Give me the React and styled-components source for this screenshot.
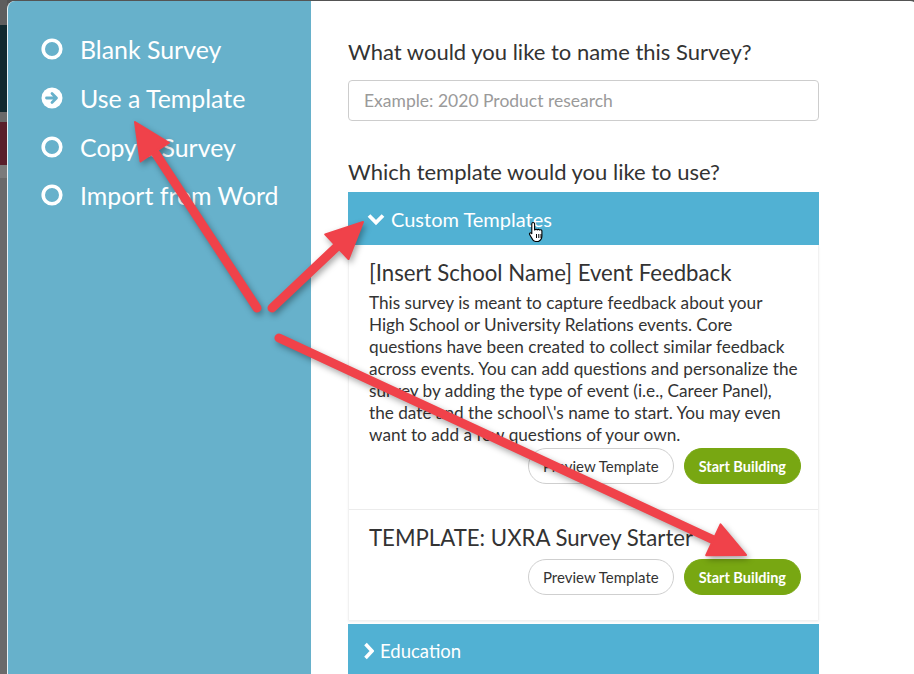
import React from 'react';
import styled, { createGlobalStyle } from 'styled-components';

const Global = createGlobalStyle`
  html, body { margin: 0; padding: 0; width: 914px; height: 674px; overflow: hidden; background: #545454; }
  body { font-family: Lato, "Open Sans", sans-serif; }
  * { box-sizing: border-box; }
`;

const Screen = styled.div`
  position: relative;
  width: 914px;
  height: 674px;
  display: flex;
  padding-top: 1px;
  overflow: hidden;
  background: #545454;
`;

const BackStrip = styled.div`
  width: 7px;
  flex: none;
  display: flex;
  flex-direction: column;
  margin-top: -1px;
`;

const Segment = styled.div`
  height: ${p => p.$h}px;
  flex: ${p => (p.$grow ? 1 : 'none')};
  background: ${p => p.$c};
`;

const Modal = styled.div`
  flex: 1;
  display: flex;
  margin-right: -4px;
  border-radius: 8px 8px 0 0;
  overflow: hidden;
  background: #fff;
  border-left: 1px solid #e8f2f5;
`;

const Sidebar = styled.nav`
  width: 303px;
  flex: none;
  background: #67b1cb;
  padding-top: 24px;
  display: flex;
  flex-direction: column;
`;

const MenuItem = styled.div`
  height: 48.7px;
  display: flex;
  align-items: center;
  gap: 17px;
  padding-left: 33px;
  color: #fff;
  font-size: 24.9px;
`;

const Main = styled.main`
  flex: 1;
  padding: 37px 0 0 37px;
  display: flex;
  flex-direction: column;
`;

const Column = styled.div`
  width: 471px;
  display: flex;
  flex-direction: column;
`;

const Heading = styled.h2`
  margin: ${p => p.$mt || 0}px 0 0;
  font-size: 22px;
  line-height: 28px;
  font-weight: 400;
  color: #333;
`;

const NameInput = styled.input`
  margin-top: 14px;
  height: 41px;
  width: 100%;
  border: 1px solid #cdcdcd;
  border-radius: 4px;
  padding: 0 15px;
  font-family: Lato, sans-serif;
  font-size: 17.5px;
  color: #333;
  outline: none;
  &::placeholder { color: #9a9a9a; }
`;

const AccHeader = styled.div`
  position: relative;
  margin-top: ${p => p.$mt}px;
  height: 53px;
  flex: none;
  background: #51b1d3;
  display: flex;
  align-items: center;
  gap: ${p => p.$gap}px;
  padding-left: ${p => p.$pl}px;
  color: #fff;
  font-size: ${p => p.$fs}px;
`;

const CardList = styled.div`
  border-left: 1px solid #f1f1f1;
  border-right: 1px solid #f1f1f1;
  box-shadow: 0 2px 2px rgba(0,0,0,0.06);
`;

const Card = styled.section`
  padding: 14px 17px 25px 20px;
  border-top: ${p => (p.$sep ? '1px solid #ececec' : 'none')};
  display: flex;
  flex-direction: column;
`;

const CardTitle = styled.h3`
  margin: 0;
  font-size: 22.2px;
  line-height: 28px;
  font-weight: 400;
  color: #333;
`;

const CardText = styled.p`
  margin: 5px 0 0;
  font-size: 17.2px;
  line-height: 22px;
  color: #333;
  white-space: nowrap;
`;

const Actions = styled.div`
  margin-top: ${p => p.$mt}px;
  display: flex;
  justify-content: flex-end;
  gap: 10px;
`;

const Button = styled.button`
  height: 36px;
  border-radius: 18px;
  padding: 0 14px;
  font-family: Lato, sans-serif;
  font-size: ${p => (p.$primary ? 14.5 : 15)}px;
  border: 1px solid ${p => (p.$primary ? '#78a712' : '#cfcfcf')};
  background: ${p => (p.$primary ? '#78a712' : '#fff')};
  color: ${p => (p.$primary ? '#fff' : '#333')};
  font-weight: ${p => (p.$primary ? 700 : 400)};
  cursor: pointer;
`;

const Overlay = styled.svg`
  position: absolute;
  left: 0;
  top: 0;
  pointer-events: none;
  filter: drop-shadow(2px 3px 3px rgba(0,0,0,0.35));
`;

const Cursor = styled.svg`
  position: absolute;
  left: 528px;
  top: 221px;
`;

const Circle = ({ active }) => (
  <svg width="22" height="22" viewBox="0 0 22 22">
    {active ? (
      <>
        <circle cx="11" cy="11" r="10.5" fill="#fff" />
        <path d="M5.5 11h9M11 6.5l4.5 4.5-4.5 4.5" stroke="#67b1cb" strokeWidth="2.8" fill="none" strokeLinecap="round" strokeLinejoin="round" />
      </>
    ) : (
      <circle cx="11" cy="11" r="8.8" fill="none" stroke="#fff" strokeWidth="3.6" />
    )}
  </svg>
);

const ChevronDown = () => (
  <svg width="18" height="14" viewBox="0 0 18 14">
    <polyline points="2,3.5 9,10.5 16,3.5" fill="none" stroke="#fff" strokeWidth="3.8" strokeLinejoin="miter" />
  </svg>
);

const ChevronRight = () => (
  <svg width="11" height="18" viewBox="0 0 11 18">
    <polyline points="2.5,2 9,9 2.5,16" fill="none" stroke="#fff" strokeWidth="3.6" strokeLinejoin="miter" />
  </svg>
);

const arrows = [
  { t: [257, 308], h: [135, 122] },
  { t: [272, 308], h: [363, 222] },
  { t: [279, 338], h: [746, 555] },
];

const Arrow = ({ t, h }) => {
  const dx = h[0] - t[0];
  const dy = h[1] - t[1];
  const len = Math.hypot(dx, dy);
  const ux = dx / len;
  const uy = dy / len;
  const hl = 36;
  const hw = 17;
  const bx = h[0] - ux * hl;
  const by = h[1] - uy * hl;
  const nx = -uy;
  const ny = ux;
  const pts = `${h[0]},${h[1]} ${bx + nx * hw},${by + ny * hw} ${bx - nx * hw},${by - ny * hw}`;
  return (
    <g>
      <line x1={t[0]} y1={t[1]} x2={bx + ux * 4} y2={by + uy * 4} stroke="#f0424a" strokeWidth="9" strokeLinecap="round" />
      <polygon points={pts} fill="#f0424a" stroke="#f0424a" strokeWidth="2" strokeLinejoin="round" />
    </g>
  );
};

const menu = [
  { label: 'Blank Survey' },
  { label: 'Use a Template', active: true },
  { label: 'Copy a Survey' },
  { label: 'Import from Word' },
];

const description = [
  'This survey is meant to capture feedback about your',
  'High School or University Relations events. Core',
  'questions have been created to collect similar feedback',
  'across events. You can add questions and personalize the',
  'survey by adding the type of event (i.e., Career Panel),',
  "the date and the school\\'s name to start. You may even",
  'want to add a few questions of your own.',
];

export default function App() {
  return (
    <>
      <Global />
      <Screen>
        <BackStrip>
          <Segment $h={25} $c="#5e5e5e" />
          <Segment $h={87} $c="#11292f" />
          <Segment $h={10} $c="#6a6a6a" />
          <Segment $h={43} $c="#5a1f2b" />
          <Segment $h={13} $c="#7b7b7b" />
          <Segment $grow $c="#6a6a6a" />
        </BackStrip>
        <Modal>
          <Sidebar>
            {menu.map(m => (
              <MenuItem key={m.label}>
                <Circle active={m.active} />
                <span>{m.label}</span>
              </MenuItem>
            ))}
          </Sidebar>
          <Main>
            <Column>
              <Heading>What would you like to name this Survey?</Heading>
              <NameInput placeholder="Example: 2020 Product research" />
              <Heading $mt={37}>Which template would you like to use?</Heading>
              <AccHeader $mt={6} $pl={19} $gap={6} $fs={20}>
                <ChevronDown />
                <span>Custom Templates</span>
              </AccHeader>
              <CardList>
                <Card>
                  <CardTitle>[Insert School Name] Event Feedback</CardTitle>
                  <CardText>
                    {description.map((line, i) => (
                      <React.Fragment key={i}>
                        {line}
                        {i < description.length - 1 && <br />}
                      </React.Fragment>
                    ))}
                  </CardText>
                  <Actions $mt={2}>
                    <Button>Preview Template</Button>
                    <Button $primary>Start Building</Button>
                  </Actions>
                </Card>
                <Card $sep>
                  <CardTitle>TEMPLATE: UXRA Survey Starter</CardTitle>
                  <Actions $mt={7}>
                    <Button>Preview Template</Button>
                    <Button $primary>Start Building</Button>
                  </Actions>
                </Card>
              </CardList>
              <AccHeader $mt={4} $pl={15} $gap={6} $fs={18.5}>
                <ChevronRight />
                <span>Education</span>
              </AccHeader>
            </Column>
          </Main>
        </Modal>
        <Cursor width="18" height="22" viewBox="0 0 18 22">
          <path d="M5 1.5c1 0 1.6.7 1.6 1.6V9l.4-.1c.3-.8 1.8-.9 2.3 0 .4-.7 1.9-.8 2.3.2.5-.6 2.1-.5 2.3.7V15c0 2.5-1.5 4.5-3.5 5.5H7.5c-1.2 0-2-.6-2.7-1.6L1.6 13.5c-.6-1 .6-2.2 1.6-1.4l.6.6V3.1c0-.9.5-1.6 1.2-1.6z" fill="#fff" stroke="#000" strokeWidth="1.1" strokeLinejoin="round" />
          <path d="M8.5 13v4M10.8 13v4M13 13v4" stroke="#000" strokeWidth="1" />
        </Cursor>
        <Overlay width="914" height="674" viewBox="0 0 914 674">
          {arrows.map((a, i) => (
            <Arrow key={i} {...a} />
          ))}
        </Overlay>
      </Screen>
    </>
  );
}
